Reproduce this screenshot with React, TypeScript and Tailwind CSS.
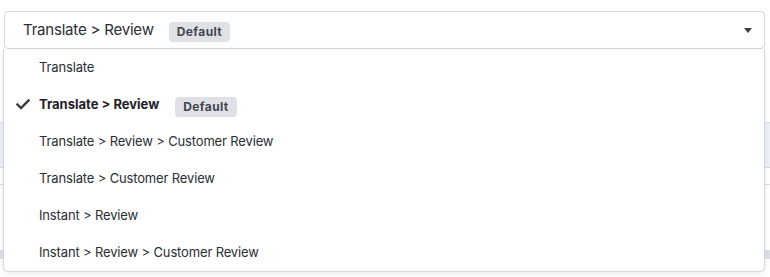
import React from "react";

const items = [
  { label: "Translate" },
  { label: "Translate > Review", selected: true, badge: true },
  { label: "Translate > Review > Customer Review" },
  { label: "Translate > Customer Review" },
  { label: "Instant > Review" },
  { label: "Instant > Review > Customer Review" },
];

function Badge() {
  return (
    <span className="inline-flex h-[20px] items-center rounded-[4px] bg-[#dfe1e6] px-[8px] text-[12px] font-bold tracking-[0.4px] text-[#42464f]">
      Default
    </span>
  );
}

export default function App() {
  return (
    <div
      className="relative h-[277px] w-[770px] overflow-hidden bg-white text-[#24272e]"
      style={{ fontFamily: "Inter, Lato, sans-serif" }}
    >
      {/* underlying page */}
      <div className="flex flex-col pt-[11px]">
        <div className="mx-[4px] mr-[5px] flex h-[38px] items-center rounded-[4px] border border-[#d5d7dc] bg-white pl-[18px] pr-[12px]">
          <span className="text-[15px] tracking-[-0.2px] text-[#2a2d33]">Translate &gt; Review</span>
          <span className="ml-[15px]">
            <Badge />
          </span>
          <span className="ml-auto h-0 w-0 border-x-[4px] border-t-[5px] border-x-transparent border-t-[#3a3c42]" />
        </div>
        <div className="mt-[73px] h-[46px] border-y border-[#d5d8de] bg-[#eef0f7]" />
        <div className="mt-[16px] h-px bg-[#d9dbe0]" />
        <div className="mt-[65px] h-[9px] bg-[#dcdfe6]" />
      </div>

      {/* dropdown menu */}
      <div className="absolute left-[3px] top-[49px] flex w-[762px] flex-col rounded-b-[5px] border border-t-0 border-[#d5d7dc] bg-white shadow-[0_2px_6px_rgba(0,0,0,0.08)]">
        {items.map((it) => (
          <div key={it.label} className="relative flex h-[37px] items-center pl-[35px]">
            {it.selected && (
              <svg
                className="absolute left-[12px] top-[13px]"
                width="14"
                height="11"
                viewBox="0 0 14 11"
                fill="none"
              >
                <path d="M1.5 5.5 L5 9 L12.5 1.5" stroke="#3a3c42" strokeWidth="2.4" strokeLinecap="square" />
              </svg>
            )}
            <span
              className={`text-[13px] ${
                it.selected ? "font-bold tracking-[0px] text-[#1e2026]" : "tracking-[-0.15px] text-[#2a2d33]"
              }`}
            >
              {it.label}
            </span>
            {it.badge && (
              <span className="ml-[16px]">
                <Badge />
              </span>
            )}
          </div>
        ))}
      </div>
    </div>
  );
}
